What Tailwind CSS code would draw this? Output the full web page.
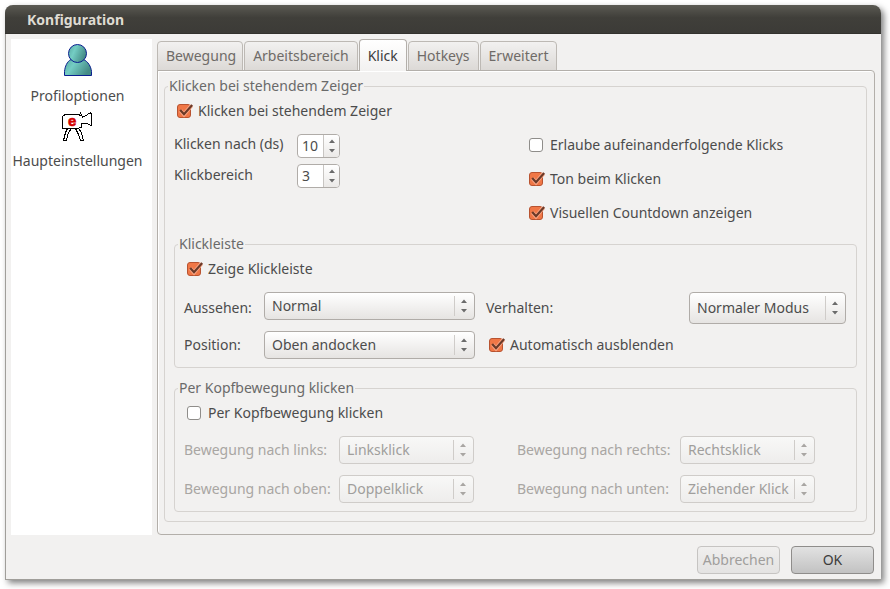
<!DOCTYPE html>
<html lang="de">
<head>
<meta charset="utf-8">
<meta name="viewport" content="width=device-width, initial-scale=1">
<title>Konfiguration</title>
<script src="https://cdn.jsdelivr.net/npm/@tailwindcss/browser@4"></script>
</head>
<body class="bg-white">
<svg class="hidden" aria-hidden="true">
  <symbol id="arrows" viewBox="0 0 6 14">
    <path d="M0 4 L3 0.5 L6 4 Z M0 10 L3 13.5 L6 10 Z" fill="currentColor"/>
  </symbol>
  <symbol id="tick" viewBox="0 0 16 16">
    <path d="M3.5 7.5 L7 11.5 L14.5 2.5" fill="none" stroke="#f9a585" stroke-width="4"/>
    <path d="M3.2 7 L7 11.2 L15.2 2" fill="none" stroke="#6b3a28" stroke-width="2.2"/>
  </symbol>
</svg>

<div class="flex min-h-screen flex-col pt-[5px] pr-[9px] pb-[9px] pl-[5px] font-['Noto_Sans','Open_Sans',sans-serif] text-sm/5 text-[#4c4c4c]">
  <main class="flex flex-1 flex-col rounded-t-lg border-b border-l border-[#a09e9a] bg-[#f2f1f0] shadow-[3px_3px_6px_rgba(0,0,0,0.5)]">
    <header class="-ml-px flex h-[29px] items-center rounded-t-lg border-b border-[#33322e] bg-linear-to-b from-[#5b5a53] via-[#403f3a] via-45% to-[#3c3b37] px-[22px] pt-px">
      <h1 class="font-bold text-[#dfdbd2]">Konfiguration</h1>
    </header>

    <div class="flex flex-1 gap-[5px] pt-[5px] pr-[6px] pl-[5px]">
      <nav class="flex w-[141px] shrink-0 flex-col items-center gap-[5px] bg-white pt-1 pr-2" aria-label="Bereiche">
        <button type="button" class="flex flex-col items-center gap-[7px]">
          <svg class="h-[36px] w-[32px]" viewBox="0 0 32 36" aria-hidden="true">
            <defs>
              <linearGradient id="teal" x1="0" y1="0" x2="1" y2="0.4">
                <stop offset="0" stop-color="#58a8a1"/><stop offset="0.4" stop-color="#74cdc4"/><stop offset="1" stop-color="#458c86"/>
              </linearGradient>
            </defs>
            <path d="M2.500 32.500 V28.500 C3 23.500 5 18.500 9 16.500 H21.500 C26 18.500 29 23.500 29.500 28.500 V32.500 Z" fill="url(#teal)" stroke="#0a1f8f"/>
            <circle cx="15.500" cy="10.500" r="9" fill="url(#teal)" stroke="#0a1f8f"/>
          </svg>
          <span>Profiloptionen</span>
        </button>
        <button type="button" class="flex flex-col items-center gap-2">
          <svg class="h-[32px] w-[32px]" viewBox="0 0 32 32" aria-hidden="true">
            <g fill="white" stroke="black" shape-rendering="crispEdges">
              <path d="M6.500 17.500 H10.500 L7.500 21.500 L5.500 29.500 H2.500 L4.500 21.500 Z M14.500 17.500 H17.500 L20.500 21.500 L22.500 29.500 H19.500 L17.500 23.500 Z"/>
              <path d="M1.500 5.500 L4 3.500 H16.500 L20.500 4.500 L19.500 1.500 L21.500 6.500 L26.500 3.500 L29.500 1.500 L30.500 3.500 V14.500 L25.500 12.500 L20.500 12.500 V16.500 L15.500 17.500 H1.500 Z"/>
            </g>
            <text x="7" y="15" fill="#d40000" stroke="#d40000" stroke-width="0.6" font-family="Liberation Sans, sans-serif" font-weight="bold" font-size="15">e</text>
          </svg>
          <span>Haupteinstellungen</span>
        </button>
      </nav>

      <section class="flex min-w-0 flex-1 flex-col">
        <div role="tablist" class="-mb-px flex items-end gap-px text-[#6f6b68]">
          <button type="button" role="tab" class="h-[30px] rounded-t border border-[#bdb9b4] bg-linear-to-b from-[#f2f1f0] to-[#dcd9d6] pr-[6px] pl-2">Bewegung</button>
          <button type="button" role="tab" class="h-[30px] rounded-t border border-[#bdb9b4] bg-linear-to-b from-[#f2f1f0] to-[#dcd9d6] px-2">Arbeitsbereich</button>
          <button type="button" role="tab" aria-selected="true" class="z-10 h-[32px] rounded-t border border-b-0 border-[#b3afaa] bg-linear-to-b from-white to-[#f2f1f0] px-2 text-[#3c3c3c]">Klick</button>
          <button type="button" role="tab" class="h-[30px] rounded-t border border-[#bdb9b4] bg-linear-to-b from-[#f2f1f0] to-[#dcd9d6] px-2">Hotkeys</button>
          <button type="button" role="tab" class="h-[30px] rounded-t border border-[#bdb9b4] bg-linear-to-b from-[#f2f1f0] to-[#dcd9d6] px-2">Erweitert</button>
        </div>

        <div role="tabpanel" class="flex-1 rounded-b rounded-tr border border-[#b3afaa] pt-[5px] pr-[7px] pb-3 pl-[6px] shadow-[inset_1px_1px_0_white]">
          <fieldset class="rounded border border-[#d6d3d0] px-[9px] pt-[5px] pb-[9px]">
            <legend class="-ml-[6px] px-px text-[#6a6a6a]">Klicken bei stehendem Zeiger</legend>
            <label class="flex w-fit items-center gap-[7px] pl-[3px]">
              <span class="relative flex"><input type="checkbox" checked class="peer size-[14px] appearance-none rounded-[3px] border border-[#8f8d8a] bg-white checked:border-[#b85330] checked:bg-[#f07746]"><svg class="pointer-events-none absolute -top-px left-0 hidden size-4 peer-checked:block"><use href="#tick"/></svg></span>
              Klicken bei stehendem Zeiger
            </label>

            <div class="grid grid-cols-[352px_1fr] pt-[7px]">
              <div class="grid grid-cols-[123px_1fr] content-start gap-y-[6px] pt-[6px]">
                <label for="delay">Klicken nach (ds)</label>
                <div class="flex h-6 w-[43px] overflow-hidden rounded border border-[#b0aca8] bg-white">
                  <input id="delay" type="text" inputmode="numeric" value="10" class="w-[25px] min-w-0 pl-1">
                  <div class="relative flex flex-1 flex-col border-l border-[#c8c5c2] bg-linear-to-b from-white to-[#ebe9e7] text-[#6b6b6b]">
                    <button type="button" class="flex-1" aria-label="Mehr"></button>
                    <button type="button" class="flex-1" aria-label="Weniger"></button>
                    <svg class="pointer-events-none absolute top-1 left-[5px] h-[14px] w-[6px]"><use href="#arrows"/></svg>
                  </div>
                </div>
                <label for="area" class="pt-px">Klickbereich</label>
                <div class="flex h-6 w-[43px] overflow-hidden rounded border border-[#b0aca8] bg-white">
                  <input id="area" type="text" inputmode="numeric" value="3" class="w-[25px] min-w-0 pl-1">
                  <div class="relative flex flex-1 flex-col border-l border-[#c8c5c2] bg-linear-to-b from-white to-[#ebe9e7] text-[#6b6b6b]">
                    <button type="button" class="flex-1" aria-label="Mehr"></button>
                    <button type="button" class="flex-1" aria-label="Weniger"></button>
                    <svg class="pointer-events-none absolute top-1 left-[5px] h-[14px] w-[6px]"><use href="#arrows"/></svg>
                  </div>
                </div>
              </div>
              <div class="flex flex-col items-start">
                <label class="flex h-[34px] items-center gap-[7px] pl-[3px]">
                  <span class="relative flex"><input type="checkbox" class="peer size-[14px] appearance-none rounded-[3px] border border-[#8f8d8a] bg-white checked:border-[#b85330] checked:bg-[#f07746]"><svg class="pointer-events-none absolute -top-px left-0 hidden size-4 peer-checked:block"><use href="#tick"/></svg></span>
                  Erlaube aufeinanderfolgende Klicks
                </label>
                <label class="flex h-[34px] items-center gap-[7px] pl-[3px]">
                  <span class="relative flex"><input type="checkbox" checked class="peer size-[14px] appearance-none rounded-[3px] border border-[#8f8d8a] bg-white checked:border-[#b85330] checked:bg-[#f07746]"><svg class="pointer-events-none absolute -top-px left-0 hidden size-4 peer-checked:block"><use href="#tick"/></svg></span>
                  Ton beim Klicken
                </label>
                <label class="flex h-[34px] items-center gap-[7px] pl-[3px]">
                  <span class="relative flex"><input type="checkbox" checked class="peer size-[14px] appearance-none rounded-[3px] border border-[#8f8d8a] bg-white checked:border-[#b85330] checked:bg-[#f07746]"><svg class="pointer-events-none absolute -top-px left-0 hidden size-4 peer-checked:block"><use href="#tick"/></svg></span>
                  Visuellen Countdown anzeigen
                </label>
              </div>
            </div>

            <fieldset class="mt-1 rounded border border-[#d6d3d0] pt-[5px] pr-[10px] pb-2 pl-[9px]">
              <legend class="-ml-[6px] px-px text-[#6a6a6a]">Klickleiste</legend>
              <label class="flex w-fit items-center gap-[7px] pl-[3px]">
                <span class="relative flex"><input type="checkbox" checked class="peer size-[14px] appearance-none rounded-[3px] border border-[#8f8d8a] bg-white checked:border-[#b85330] checked:bg-[#f07746]"><svg class="pointer-events-none absolute -top-px left-0 hidden size-4 peer-checked:block"><use href="#tick"/></svg></span>
                Zeige Klickleiste
              </label>
              <div class="mt-[13px] grid grid-cols-[80px_211px_1fr_157px] items-center gap-y-[7px]">
                <label for="look">Aussehen:</label>
                <div class="relative self-start text-[#6b6b6b]">
                  <select id="look" class="block h-7 w-full appearance-none rounded border border-[#b0aca8] bg-linear-to-b from-white to-[#e6e4e2] pl-[7px] text-[#4c4c4c]"><option>Normal</option></select>
                  <span class="pointer-events-none absolute inset-y-1 right-[20px] border-l border-[#cfccc9]"></span>
                  <svg class="pointer-events-none absolute top-[7px] right-2 h-[14px] w-[6px]"><use href="#arrows"/></svg>
                </div>
                <label for="behaviour" class="pl-[11px]">Verhalten:</label>
                <div class="relative text-[#6b6b6b]">
                  <select id="behaviour" class="block h-8 w-full appearance-none rounded border border-[#b0aca8] bg-linear-to-b from-white to-[#e6e4e2] pl-[7px] text-[#4c4c4c]"><option>Normaler Modus</option></select>
                  <span class="pointer-events-none absolute inset-y-1 right-[20px] border-l border-[#cfccc9]"></span>
                  <svg class="pointer-events-none absolute top-[9px] right-2 h-[14px] w-[6px]"><use href="#arrows"/></svg>
                </div>
                <label for="position">Position:</label>
                <div class="relative text-[#6b6b6b]">
                  <select id="position" class="block h-7 w-full appearance-none rounded border border-[#b0aca8] bg-linear-to-b from-white to-[#e6e4e2] pl-[7px] text-[#4c4c4c]"><option>Oben andocken</option></select>
                  <span class="pointer-events-none absolute inset-y-1 right-[20px] border-l border-[#cfccc9]"></span>
                  <svg class="pointer-events-none absolute top-[7px] right-2 h-[14px] w-[6px]"><use href="#arrows"/></svg>
                </div>
                <label class="col-span-2 flex items-center gap-[7px] pl-[14px]">
                  <span class="relative flex"><input type="checkbox" checked class="peer size-[14px] appearance-none rounded-[3px] border border-[#8f8d8a] bg-white checked:border-[#b85330] checked:bg-[#f07746]"><svg class="pointer-events-none absolute -top-px left-0 hidden size-4 peer-checked:block"><use href="#tick"/></svg></span>
                  Automatisch ausblenden
                </label>
              </div>
            </fieldset>

            <fieldset class="mt-[10px] rounded border border-[#d6d3d0] pt-[5px] pr-[10px] pb-2 pl-[9px]">
              <legend class="-ml-[6px] px-px text-[#6a6a6a]">Per Kopfbewegung klicken</legend>
              <label class="flex w-fit items-center gap-[7px] pl-[3px]">
                <span class="relative flex"><input type="checkbox" class="peer size-[14px] appearance-none rounded-[3px] border border-[#8f8d8a] bg-white checked:border-[#b85330] checked:bg-[#f07746]"><svg class="pointer-events-none absolute -top-px left-0 hidden size-4 peer-checked:block"><use href="#tick"/></svg></span>
                Per Kopfbewegung klicken
              </label>
              <div class="mt-[13px] grid grid-cols-[155px_135px_206px_135px] items-center gap-y-[11px] text-[#a9a6a3]">
                <label for="left">Bewegung nach links:</label>
                <div class="relative">
                  <select id="left" disabled class="block h-7 w-full appearance-none rounded border border-[#cfccc9] bg-linear-to-b from-[#f8f8f7] to-[#eeedec] pl-[7px] text-[#a09e9c] opacity-100"><option>Linksklick</option></select>
                  <span class="pointer-events-none absolute inset-y-1 right-[20px] border-l border-[#cfccc9]"></span>
                  <svg class="pointer-events-none absolute top-[7px] right-2 h-[14px] w-[6px]"><use href="#arrows"/></svg>
                </div>
                <label for="right" class="pl-[43px]">Bewegung nach rechts:</label>
                <div class="relative">
                  <select id="right" disabled class="block h-7 w-full appearance-none rounded border border-[#cfccc9] bg-linear-to-b from-[#f8f8f7] to-[#eeedec] pl-[7px] text-[#a09e9c] opacity-100"><option>Rechtsklick</option></select>
                  <span class="pointer-events-none absolute inset-y-1 right-[20px] border-l border-[#cfccc9]"></span>
                  <svg class="pointer-events-none absolute top-[7px] right-2 h-[14px] w-[6px]"><use href="#arrows"/></svg>
                </div>
                <label for="up">Bewegung nach oben:</label>
                <div class="relative">
                  <select id="up" disabled class="block h-7 w-full appearance-none rounded border border-[#cfccc9] bg-linear-to-b from-[#f8f8f7] to-[#eeedec] pl-[7px] text-[#a09e9c] opacity-100"><option>Doppelklick</option></select>
                  <span class="pointer-events-none absolute inset-y-1 right-[20px] border-l border-[#cfccc9]"></span>
                  <svg class="pointer-events-none absolute top-[7px] right-2 h-[14px] w-[6px]"><use href="#arrows"/></svg>
                </div>
                <label for="down" class="pl-[43px]">Bewegung nach unten:</label>
                <div class="relative">
                  <select id="down" disabled class="block h-7 w-full appearance-none rounded border border-[#cfccc9] bg-linear-to-b from-[#f8f8f7] to-[#eeedec] pl-[7px] text-[#a09e9c] opacity-100"><option>Ziehender Klick</option></select>
                  <span class="pointer-events-none absolute inset-y-1 right-[20px] border-l border-[#cfccc9]"></span>
                  <svg class="pointer-events-none absolute top-[7px] right-2 h-[14px] w-[6px]"><use href="#arrows"/></svg>
                </div>
              </div>
            </fieldset>
          </fieldset>
        </div>
      </section>
    </div>

    <footer class="flex justify-end gap-[11px] pt-[11px] pr-[7px] pb-[5px]">
      <button type="button" disabled class="h-7 w-[83px] rounded border border-[#c6c4c2] bg-linear-to-b from-[#f0efee] to-[#e4e3e2] text-[#a09e9c]">Abbrechen</button>
      <button type="button" class="h-7 w-[83px] rounded border border-[#8f8d8b] bg-linear-to-b from-[#e2e2e2] to-[#c2c2c2] text-[#3c3c3c]">OK</button>
    </footer>
  </main>
</div>
</body>
</html>
